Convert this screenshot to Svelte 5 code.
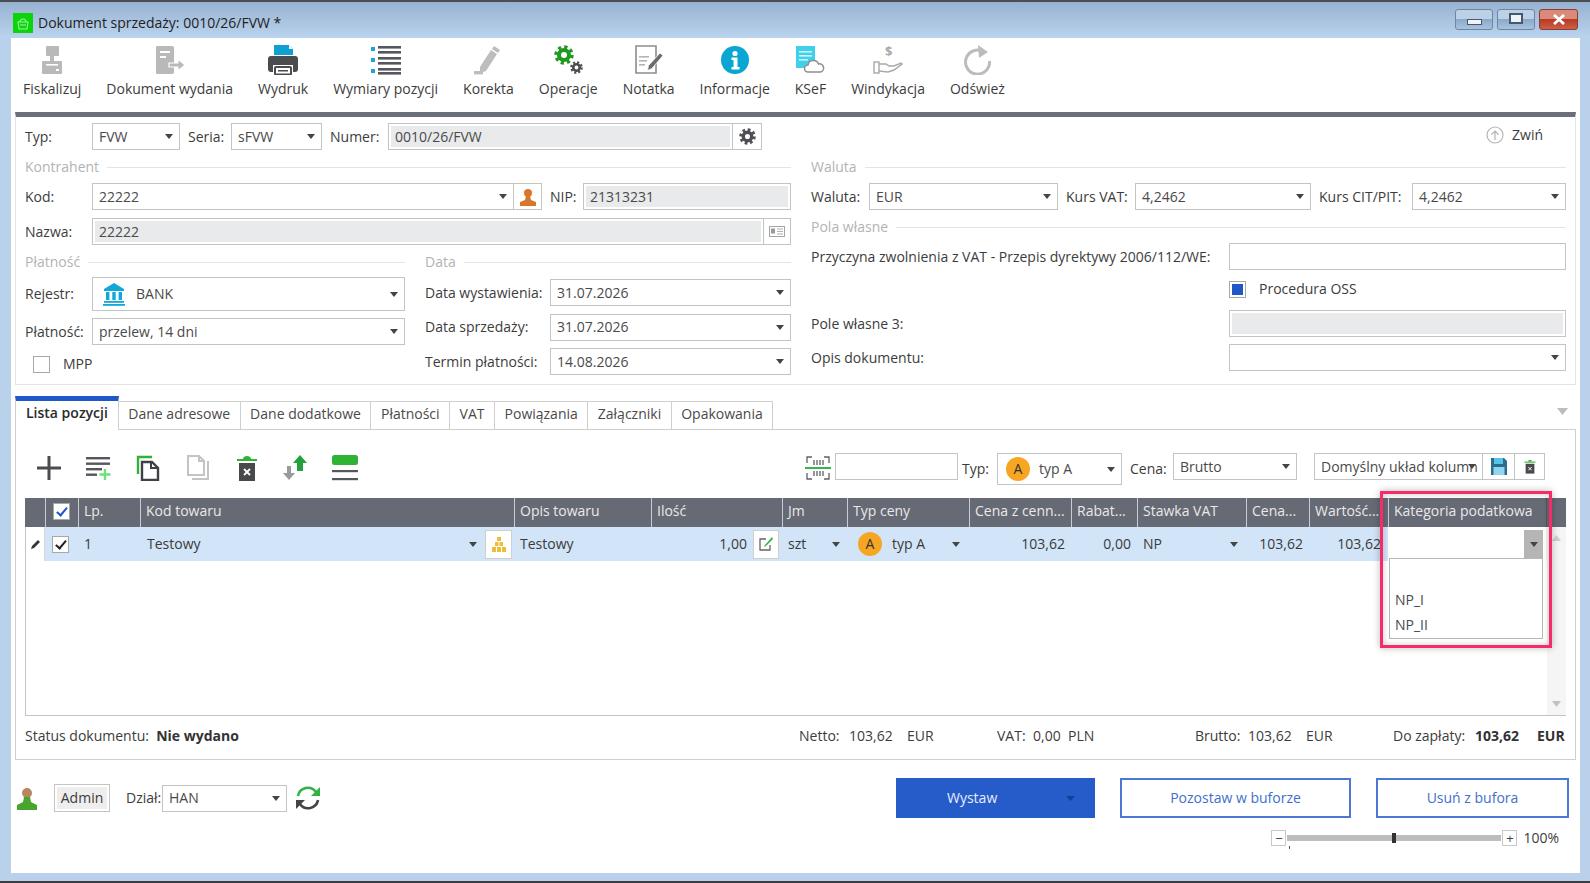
<script>
  const ribbon = ['Fiskalizuj', 'Dokument wydania', 'Wydruk', 'Wymiary pozycji', 'Korekta', 'Operacje', 'Notatka', 'Informacje', 'KSeF', 'Windykacja', 'Odśwież'];
  const tabs = ['Lista pozycji', 'Dane adresowe', 'Dane dodatkowe', 'Płatności', 'VAT', 'Powiązania', 'Załączniki', 'Opakowania'];
  const heads = ['', '', 'Lp.', 'Kod towaru', 'Opis towaru', 'Ilość', 'Jm', 'Typ ceny', 'Cena z cenn...', 'Rabat...', 'Stawka VAT', 'Cena...', 'Wartość...', 'Kategoria podatkowa', ''];
</script>

{#snippet caret()}
  <svg class="caret" width="8" height="5" viewBox="0 0 8 5"><path d="M0 0h8L4 5z" fill="#444" /></svg>
{/snippet}

{#snippet sel(value)}
  <div class="field sel"><span class="val">{value}</span>{@render caret()}</div>
{/snippet}

{#snippet badge()}
  <span class="badge">A</span>
{/snippet}

{#snippet gear(size, color)}
  <svg width={size} height={size} viewBox="0 0 20 20">
    <circle cx="10" cy="10" r="5" fill="none" stroke={color} stroke-width="4" />
    <circle cx="10" cy="10" r="8" fill="none" stroke={color} stroke-width="3.4" stroke-dasharray="3.2 3.08" />
  </svg>
{/snippet}

{#snippet ribbonIcon(i)}
  {#if i === 0}
    <svg width="22" height="30" viewBox="0 0 22 30" fill="#b9b9b9"><rect x="5" y="1" width="13" height="10" rx="1" /><rect x="9" y="11" width="4" height="6" /><path d="M2 16h18a1 1 0 0 1 1 1v11a1 1 0 0 1-1 1H2a1 1 0 0 1-1-1V17a1 1 0 0 1 1-1z" /><rect x="5" y="19" width="12" height="1.6" fill="#fff" /><rect x="15" y="24" width="3" height="2" fill="#fff" /></svg>
  {:else if i === 1}
    <svg width="30" height="30" viewBox="0 0 30 30" fill="#b9b9b9"><path d="M2 1h15a2 2 0 0 1 2 2v24a2 2 0 0 1-2 2H2a1 1 0 0 1-1-1V2a1 1 0 0 1 1-1z" /><rect x="5" y="6" width="10" height="2" fill="#fff" /><rect x="5" y="11" width="6" height="2" fill="#fff" /><path d="M14 18h9v-4l7 6-7 6v-4h-9z" stroke="#fff" stroke-width="1.2" /></svg>
  {:else if i === 2}
    <svg width="30" height="30" viewBox="0 0 30 30"><path d="M6 0h15l4 4v6H6z" fill="#0fa0d2" /><path d="M21 0v4h4z" fill="#fff" /><path d="M3 11h24a3 3 0 0 1 3 3v10a3 3 0 0 1-3 3h-2v-7H5v7H3a3 3 0 0 1-3-3V14a3 3 0 0 1 3-3z" fill="#4a4c50" /><rect x="7" y="22" width="16" height="7.5" rx="1" fill="none" stroke="#4a4c50" stroke-width="2" /><rect x="10" y="25" width="10" height="1.5" fill="#4a4c50" /></svg>
  {:else if i === 3}
    <svg width="30" height="30" viewBox="0 0 30 30"><g fill="#1aa7d8"><rect x="0" y="2" width="4" height="4" /><rect x="0" y="13" width="4" height="4" /><rect x="0" y="24" width="4" height="4" /></g><g fill="#55575c"><rect x="7" y="1" width="23" height="2.6" /><rect x="7" y="6" width="23" height="2.6" /><rect x="7" y="12" width="23" height="2.6" /><rect x="7" y="17" width="23" height="2.6" /><rect x="7" y="23" width="23" height="2.6" /><rect x="7" y="27" width="23" height="2.6" /></g></svg>
  {:else if i === 4}
    <svg width="28" height="30" viewBox="0 0 28 30" fill="#bdbdbd"><path d="M20 1l6 4-2 3-6-4z" /><path d="M17 5l6 4-11 17-6 2 0-6z" /><rect x="0" y="26" width="9" height="3.4" /></svg>
  {:else if i === 5}
    <svg width="30" height="30" viewBox="0 0 30 30"><g transform="translate(1 0)">{@render gear(20, '#1f9a1f')}</g></svg>
    <span class="ops-small">{@render gear(13, '#4c4c4c')}</span>
  {:else if i === 6}
    <svg width="30" height="30" viewBox="0 0 30 30"><path d="M2 1h20v27H2z" fill="#fff" stroke="#8d8d8d" stroke-width="1.6" /><g fill="#b5b5b5"><rect x="5" y="11" width="10" height="1.6" /><rect x="5" y="15" width="8" height="1.6" /><rect x="5" y="19" width="6" height="1.6" /></g><path d="M26 8l3 2.5-11 13-4.5 2 1-5z" fill="#6b6b6b" stroke="#fff" stroke-width=".8" /></svg>
  {:else if i === 7}
    <svg width="30" height="30" viewBox="0 0 30 30"><circle cx="15" cy="15" r="14" fill="#0aa6d3" /><circle cx="15" cy="8.5" r="2.6" fill="#fff" /><path d="M11.5 12.5h6v9.5h2v2.5h-8V22h2v-7h-2z" fill="#fff" /></svg>
  {:else if i === 8}
    <svg width="30" height="30" viewBox="0 0 30 30"><path d="M1 1h19v22H1z" fill="#3fd0ea" /><g fill="#fff" opacity=".75"><rect x="4" y="6" width="13" height="1.6" /><rect x="4" y="10" width="13" height="1.6" /><rect x="4" y="14" width="9" height="1.6" /></g><path d="M13 27a3.5 3.5 0 0 1 0-7 5.5 5.5 0 0 1 10.500-1 4 4 0 0 1 2 8z" fill="#fff" stroke="#8e8e8e" stroke-width="1.5" /></svg>
  {:else if i === 9}
    <svg width="30" height="30" viewBox="0 0 30 30" fill="none" stroke="#a9a9a9" stroke-width="1.4"><text x="12" y="11" font-size="13" font-family="Open Sans, sans-serif" font-weight="700" fill="#a9a9a9" stroke="none">$</text><rect x="1" y="17" width="5" height="11" /><path d="M6 19h7l3 2h5l7-3 1 1-8 6-6 2-9-1" /></svg>
  {:else}
    <svg width="30" height="30" viewBox="0 0 30 30" fill="none"><path d="M22 7a12 12 0 1 0 5.500 9" stroke="#bcbcbc" stroke-width="3" /><path d="M16 0l10 7-9 6z" fill="#bcbcbc" /></svg>
  {/if}
{/snippet}

<div class="window">
  <header class="title">
    <span class="app-ico">
      <svg width="14" height="14" viewBox="0 0 14 14" fill="none" stroke="#9ff09f" stroke-width="1.1"><path d="M2 6h10l-1 7H3z" /><path d="M4 6a3 3 0 0 1 6 0" /><path d="M4 9h6" /></svg>
    </span>
    <span class="title-text">Dokument sprzedaży: 0010/26/FVW *</span>
    <div class="winbtns">
      <span class="wb"><i class="wb-min"></i></span>
      <span class="wb"><i class="wb-max"></i></span>
      <span class="wb close">
        <svg width="14" height="11" viewBox="0 0 14 11"><path d="M2 1l10 9M12 1L2 10" stroke="#fff" stroke-width="2.8" /></svg>
      </span>
    </div>
  </header>

  <div class="client">
    <nav class="ribbon">
      {#each ribbon as label, i}
        <div class="rb-item">
          <div class="rb-ico">{@render ribbonIcon(i)}</div>
          <span>{label}</span>
        </div>
      {/each}
    </nav>

    <section class="form">
      <div class="row row-top">
        <label>Typ:</label>
        {@render sel('FVW')}
        <label class="pad">Seria:</label>
        {@render sel('sFVW')}
        <label class="pad">Numer:</label>
        <div class="field ro"><span class="val">0010/26/FVW</span></div>
        <div class="field btn">{@render gear(17, '#4d4f54')}</div>
        <div class="zwin">
          <svg width="18" height="18" viewBox="0 0 18 18" fill="none" stroke="#b5b5b5" stroke-width="1.2"><circle cx="9" cy="9" r="8" /><path d="M9 14V5M5.500 8.500L9 5l3.500 3.500" /></svg>
          <span>Zwiń</span>
        </div>
      </div>

      <div class="cols">
        <div class="col">
          <div class="heading"><span>Kontrahent</span></div>
          <div class="row row-kod">
            <label>Kod:</label>
            {@render sel('22222')}
            <div class="field btn">
              <svg width="16" height="18" viewBox="0 0 16 18" fill="#d9762c"><circle cx="8" cy="5" r="4" /><path d="M6 8h4l1 4 5 2v4H0v-4l5-2z" /></svg>
            </div>
            <label class="pad">NIP:</label>
            <div class="field ro"><span class="val">21313231</span></div>
          </div>
          <div class="row row-nazwa">
            <label>Nazwa:</label>
            <div class="field ro"><span class="val">22222</span></div>
            <div class="field btn">
              <svg width="16" height="11" viewBox="0 0 16 11"><rect x=".5" y=".5" width="15" height="10" fill="#fff" stroke="#a5a5a5" /><rect x="2" y="2.500" width="4" height="5" fill="#9a9a9a" /><path d="M8 3h6M8 5.500h6M8 8h6" stroke="#b0b0b0" /></svg>
            </div>
          </div>

          <div class="subcols">
            <div>
              <div class="heading"><span>Płatność</span></div>
              <div class="row row-pay tall">
                <label>Rejestr:</label>
                <div class="field sel">
                  <svg class="bank" width="24" height="24" viewBox="0 0 24 24" fill="#10a8d8"><path d="M12 1L2 7v2h20V7z" /><rect x="4" y="10" width="3.400" height="8" /><rect x="10.300" y="10" width="3.400" height="8" /><rect x="16.600" y="10" width="3.400" height="8" /><rect x="2" y="19" width="20" height="1.800" /><rect x="1" y="22" width="22" height="1.800" /></svg>
                  <span class="val bank-val">BANK</span>
                  {@render caret()}
                </div>
              </div>
              <div class="row row-pay">
                <label>Płatność:</label>
                {@render sel('przelew, 14 dni')}
              </div>
              <div class="check-row mpp"><i class="chk"></i><span>MPP</span></div>
            </div>
            <div>
              <div class="heading"><span>Data</span></div>
              <div class="dates">
                <div class="row row-date"><label>Data wystawienia:</label>{@render sel('31.07.2026')}</div>
                <div class="row row-date"><label>Data sprzedaży:</label>{@render sel('31.07.2026')}</div>
                <div class="row row-date"><label>Termin płatności:</label>{@render sel('14.08.2026')}</div>
              </div>
            </div>
          </div>
        </div>

        <div class="col">
          <div class="heading"><span>Waluta</span></div>
          <div class="row row-cur">
            <label>Waluta:</label>
            {@render sel('EUR')}
            <label class="pad">Kurs VAT:</label>
            {@render sel('4,2462')}
            <label class="pad">Kurs CIT/PIT:</label>
            {@render sel('4,2462')}
          </div>
          <div class="heading h-own"><span>Pola własne</span></div>
          <div class="row row-own first">
            <label>Przyczyna zwolnienia z VAT - Przepis dyrektywy 2006/112/WE:</label>
            <div class="field"></div>
          </div>
          <div class="row row-own oss">
            <span></span>
            <div class="check-row"><i class="chk on"></i><span>Procedura OSS</span></div>
          </div>
          <div class="row row-own pole">
            <label>Pole własne 3:</label>
            <div class="field ro"></div>
          </div>
          <div class="row row-own opis">
            <label>Opis dokumentu:</label>
            {@render sel('')}
          </div>
        </div>
      </div>
    </section>

    <div class="tabbar">
      {#each tabs as t, i}
        <div class="tab" class:active={i === 0}>{t}</div>
      {/each}
      <svg class="collapse" width="11" height="7" viewBox="0 0 11 7"><path d="M0 0h11L5.500 7z" fill="#bdbdbd" /></svg>
    </div>

    <section class="panel">
      <div class="tools">
        <div class="tool-icons">
          <svg width="26" height="26" viewBox="0 0 26 26"><path d="M13 1v24M1 13h24" stroke="#4a4c50" stroke-width="3" /></svg>
          <svg width="26" height="26" viewBox="0 0 26 26"><g fill="#55575c"><rect x="0" y="2" width="24" height="2.400" /><rect x="0" y="7.500" width="24" height="2.400" /><rect x="0" y="13" width="16" height="2.400" /><rect x="0" y="18.500" width="11" height="2.400" /></g><path d="M19 14v11M13.500 19.500h11" stroke="#6fe07c" stroke-width="2.400" /></svg>
          <svg width="26" height="26" viewBox="0 0 26 26" fill="none"><path d="M2 19V2h14" stroke="#2fb335" stroke-width="2.400" /><path d="M6 7h10l6 6v12H6z" fill="#fff" stroke="#3f4145" stroke-width="2.400" /><path d="M15 7v6h7" stroke="#3f4145" stroke-width="2" /></svg>
          <svg width="26" height="26" viewBox="0 0 26 26" fill="none" stroke="#c4c4c4" stroke-width="2"><path d="M2 1h11l5 5v14H2z" /><path d="M13 1v5h5" /><path d="M22 6v18H6" /></svg>
          <svg width="22" height="26" viewBox="0 0 22 26"><path d="M1 4h20V6H1z" fill="#2fb335" /><path d="M7 4c0-4 8-4 8 0" fill="#2fb335" /><rect x="3" y="8" width="16" height="18" fill="#48494d" /><path d="M8 14l6 6M14 14l-6 6" stroke="#fff" stroke-width="1.800" /></svg>
          <svg width="26" height="26" viewBox="0 0 26 26"><path d="M7 25l-6-7h4v-7h4v7h4z" fill="#9a9a9a" /><path d="M18 0l7 8h-4v8h-6V8h-4z" fill="#25a03f" /></svg>
          <svg width="26" height="26" viewBox="0 0 26 26"><rect x="0" y="0" width="26" height="10" rx="2.500" fill="#2fb335" /><rect x="0" y="15" width="26" height="2.200" fill="#55575c" /><rect x="0" y="23" width="26" height="2.200" fill="#55575c" /></svg>
        </div>
        <div class="tool-right">
          <svg class="barcode" width="26" height="26" viewBox="0 0 26 26" fill="none" stroke="#5f6165" stroke-width="1.300"><path d="M2 8V2h5M24 8V2h-5M2 18v6h5M24 18v6h-5" /><path d="M9 5v5M12 5v5M15 5v5M18 5v5M9 16v5M12 16v5M15 16v5M18 16v5" /><path d="M0 13h26" stroke="#36b54a" stroke-width="2" /></svg>
          <div class="field search"></div>
          <label>Typ:</label>
          <div class="field sel typ">{@render badge()}<span class="val">typ A</span>{@render caret()}</div>
          <label>Cena:</label>
          {@render sel('Brutto')}
          <div class="layout">{@render sel('Domyślny układ kolumn')}</div>
          <div class="field btn">
            <svg width="16" height="17" viewBox="0 0 16 17"><path d="M0 0h13l3 3v14H0z" fill="#2a6d8d" /><rect x="3" y="0" width="9" height="6" fill="#58c3e6" /><rect x="2.500" y="9" width="11" height="8" fill="#8fd7ef" /></svg>
          </div>
          <div class="field btn">
            <svg width="12" height="17" viewBox="0 0 22 26"><path d="M1 4h20V6H1z" fill="#2fb335" /><path d="M7 4c0-4 8-4 8 0" fill="#2fb335" /><rect x="3" y="8" width="16" height="18" fill="#48494d" /><path d="M8 14l6 6M14 14l-6 6" stroke="#fff" stroke-width="1.800" /></svg>
          </div>
        </div>
      </div>

      <div class="grid">
        <div class="thead">
          {#each heads as h, i}
            <div class="th">
              {#if i === 1}<i class="chk checked blue"></i>{:else}{h}{/if}
            </div>
          {/each}
        </div>
        <div class="tr">
          <div class="td pin">
            <svg width="11" height="11" viewBox="0 0 11 11"><path d="M8 1l2 2-6 6-3 1 1-3z" fill="#333" /></svg>
          </div>
          <div class="td center"><i class="chk checked"></i></div>
          <div class="td lp">1</div>
          <div class="td kod"><span>Testowy</span>{@render caret()}<div class="cellbtn">
            <svg width="16" height="17" viewBox="0 0 16 17" fill="#f0bd3a"><rect x="6" y="1" width="4" height="4" /><rect x="4" y="6" width="3.500" height="4" /><rect x="8.500" y="6" width="3.500" height="4" /><rect x="1" y="11" width="4" height="5" /><rect x="6" y="11" width="4" height="5" /><rect x="11" y="11" width="4" height="5" /></svg>
          </div></div>
          <div class="td">Testowy</div>
          <div class="td ilosc"><span>1,00</span><div class="cellbtn small">
            <svg width="16" height="16" viewBox="0 0 16 16" fill="none"><path d="M12 9v5H2V3h6" stroke="#666" stroke-width="1.300" /><path d="M14 1L7 9l-1 2 2-1 7-7z" fill="#35b54a" /></svg>
          </div></div>
          <div class="td jm"><span>szt</span>{@render caret()}</div>
          <div class="td typc">{@render badge()}<span>typ A</span>{@render caret()}</div>
          <div class="td num">103,62</div>
          <div class="td num">0,00</div>
          <div class="td vat"><span>NP</span>{@render caret()}</div>
          <div class="td num">103,62</div>
          <div class="td num tight">103,62</div>
          <div class="td edit"><div class="arrowbox">{@render caret()}</div></div>
          <div class="td sb"></div>
        </div>
        <div class="gridbody">
          <div class="scroll">
            <svg width="9" height="6" viewBox="0 0 9 6"><path d="M0 6h9L4.500 0z" fill="#d0d0d0" /></svg>
            <svg width="9" height="6" viewBox="0 0 9 6"><path d="M0 0h9L4.500 6z" fill="#c2c2c2" /></svg>
          </div>
        </div>

        <div class="popup">
          <div class="opt"></div>
          <div class="opt">NP_I</div>
          <div class="opt">NP_II</div>
        </div>
        <div class="mark"></div>
      </div>

      <div class="status">
        <span>Status dokumentu:&nbsp; <b>Nie wydano</b></span>
        <span>Netto:</span><span>103,62</span><span>EUR</span>
        <span>VAT:</span><span>0,00</span><span>PLN</span>
        <span>Brutto:</span><span>103,62</span><span>EUR</span>
        <span>Do zapłaty:</span><b>103,62</b><b>EUR</b>
      </div>
    </section>

    <footer class="foot">
      <div class="foot-left">
        <svg width="22" height="24" viewBox="0 0 22 24"><circle cx="11" cy="6" r="5" fill="#b8865f" /><path d="M8 10h6l1 5 6 3v5H1v-5l6-3z" fill="#4aa52e" /></svg>
        <div class="field admin"><span>Admin</span></div>
        <label>Dział:</label>
        {@render sel('HAN')}
        <svg class="refresh" width="26" height="26" viewBox="0 0 26 26" fill="none"><path d="M3 11a10 10 0 0 1 18-4" stroke="#2fb345" stroke-width="2.600" /><path d="M25 2v9h-9z" fill="#2fb345" /><path d="M23 15a10 10 0 0 1-18 4" stroke="#444" stroke-width="2.600" /><path d="M1 24v-9h9z" fill="#444" /></svg>
      </div>
      <div class="foot-right">
        <button class="primary"><span>Wystaw</span><svg width="9" height="5" viewBox="0 0 9 5"><path d="M0 0h9L4.500 5z" fill="#123f99" /></svg></button>
        <button class="ghost b1">Pozostaw w buforze</button>
        <button class="ghost b2">Usuń z bufora</button>
      </div>
    </footer>

    <div class="zoombar">
      <span class="zb">−</span>
      <div class="slider"><i></i><em></em></div>
      <span class="zb">+</span>
      <span class="pct">100%</span>
    </div>
  </div>
</div>

<style>
  :global(body) {
    margin: 0;
    background: #3a3c40;
  }

  .window {
    width: 1590px;
    height: 881px;
    overflow: hidden;
    box-sizing: border-box;
    border-top: 2px solid #4a4d52;
    background: #b9d1ea;
    font: 14px/18px "Open Sans", sans-serif;
    color: #3c3c3c;
    position: relative;
  }

  .title {
    height: 36px;
    box-sizing: border-box;
    display: flex;
    align-items: center;
    padding: 6px 12px 0 13px;
    background: linear-gradient(#97b2d1, #bad3ee);
  }
  .app-ico {
    width: 20px;
    height: 20px;
    background: #0ad40a;
    display: flex;
    align-items: center;
    justify-content: center;
    margin-right: 5px;
  }
  .title-text {
    color: #222;
  }
  .winbtns {
    margin-left: auto;
    display: flex;
    gap: 4px;
    margin-top: -8px;
  }
  .wb {
    width: 38px;
    height: 21px;
    box-sizing: border-box;
    border: 1px solid #6d86a3;
    border-radius: 3px;
    background: linear-gradient(#bcd0e6 45%, #8ba9c9 50%, #a8c3de);
    display: flex;
    align-items: center;
    justify-content: center;
  }
  .wb.close {
    background: linear-gradient(#d98a78 45%, #bb3a22 50%, #c9604a);
    border-color: #8a3d30;
    width: 39px;
  }
  .wb-min {
    width: 13px;
    height: 4px;
    background: #eef3f8;
    border: 1px solid #46586d;
    margin-top: 5px;
  }
  .wb-max {
    width: 10px;
    height: 7px;
    background: #eef3f8;
    box-shadow: inset 0 0 0 2px #eef3f8;
    border: 2px solid #46586d;
    margin-top: -2px;
  }

  .client {
    margin: 0 10px 0 11px;
    height: 835px;
    background: #fff;
    padding: 0 4px;
    box-sizing: border-box;
    display: flex;
    flex-direction: column;
  }

  .ribbon {
    height: 74px;
    box-sizing: border-box;
    border-bottom: 0;
    display: flex;
    gap: 25px;
    padding: 7px 0 0 8px;
    flex: none;
  }
  .rb-item {
    display: flex;
    flex-direction: column;
    align-items: center;
  }
  .rb-ico {
    height: 30px;
    margin-bottom: 5px;
    position: relative;
    display: flex;
    justify-content: center;
  }
  .ops-small {
    position: absolute;
    left: 17px;
    top: 15px;
  }

  .form {
    flex: none;
    height: 273px;
    box-sizing: border-box;
    border-top: 5px solid #6b6f7a;
    border-left: 1px solid #e4e4e4;
    border-right: 1px solid #e4e4e4;
    border-bottom: 1px solid #e4e4e4;
    padding: 6px 9px 0;
  }

  label {
    white-space: nowrap;
    color: #3c3c3c;
    align-self: center;
  }
  .pad {
    padding-left: 8px;
  }
  .row {
    display: grid;
    height: 27px;
    align-items: stretch;
  }
  .field {
    border: 1px solid #c4c4c4;
    box-sizing: border-box;
    background: #fff;
    display: flex;
    align-items: center;
    padding: 0 6px;
    min-width: 0;
    white-space: nowrap;
  }
  .val {
    flex: 1;
    min-width: 0;
    color: #4a4a4a;
  }
  .ro {
    background: #e9eaec;
    box-shadow: inset 0 0 0 2px #fff;
  }
  .btn {
    justify-content: center;
    padding: 0;
    border-left: 0;
  }
  .caret {
    flex: none;
    margin-right: 0;
  }

  .row-top {
    grid-template-columns: 67px 88px 51px 91px 66px 345px 29px 1fr;
  }
  .zwin {
    justify-self: end;
    display: flex;
    align-items: center;
    gap: 8px;
    margin-right: 23px;
    margin-top: -3px;
  }
  .cols {
    display: grid;
    grid-template-columns: 766px 755px;
    gap: 20px;
    margin-top: 8px;
  }
  .heading {
    height: 18px;
    display: flex;
    align-items: center;
    gap: 8px;
    color: #b3b3b3;
  }
  .heading::after {
    content: "";
    flex: 1;
    height: 1px;
    background: #e4e4e4;
  }
  .row-kod {
    grid-template-columns: 67px 422px 28px 41px 208px;
    margin-top: 7px;
  }
  .row-nazwa {
    grid-template-columns: 67px 672px 27px;
    margin-top: 8px;
  }
  .subcols {
    display: grid;
    grid-template-columns: 380px 366px;
    gap: 20px;
    margin-top: 8px;
  }
  .row-pay {
    grid-template-columns: 67px 313px;
    margin-top: 7px;
  }
  .row-pay.tall {
    height: 34px;
    margin-top: 6px;
  }
  .bank {
    margin-right: 10px;
    margin-left: 3px;
  }
  .bank-val {
    flex: 1;
  }
  .check-row {
    display: flex;
    align-items: center;
    gap: 13px;
  }
  .mpp {
    height: 26px;
    margin-top: 6px;
    padding-left: 8px;
  }
  .chk {
    display: block;
    width: 17px;
    height: 17px;
    box-sizing: border-box;
    border: 1px solid #a8a8a8;
    background: #fff;
    position: relative;
    flex: none;
  }
  .chk.on::after {
    content: "";
    position: absolute;
    inset: 2px;
    background: #1f58c7;
  }
  .chk.checked::after {
    content: "";
    position: absolute;
    left: 5px;
    top: 1px;
    width: 4px;
    height: 9px;
    border: solid #222;
    border-width: 0 2px 2px 0;
    transform: rotate(40deg);
  }
  .chk.blue::after {
    border-color: #1f58c7;
  }
  .dates {
    margin-top: 8px;
    display: flex;
    flex-direction: column;
    gap: 7.5px;
  }
  .row-date {
    grid-template-columns: 125px 241px;
  }
  .row-cur {
    grid-template-columns: 58px 189px 77px 176px 101px 154px;
    margin-top: 7px;
  }
  .row-cur label {
    font-size: 14px;
  }
  .h-own {
    margin-top: 8px;
  }
  .row-own {
    grid-template-columns: 418px 337px;
    margin-top: 7px;
  }
  .row-own.oss {
    margin-top: 6px;
    height: 26px;
  }
  .row-own.pole {
    margin-top: 8px;
  }

  .tabbar {
    flex: none;
    margin-top: 11px;
    height: 33px;
    display: flex;
    align-items: flex-end;
    position: relative;
    z-index: 1;
  }
  .tab {
    height: 28px;
    box-sizing: border-box;
    border: 1px solid #cfcfcf;
    border-left: 0;
    border-bottom: 0;
    padding: 3px 9.500px 0;
    color: #4a4a4a;
    white-space: nowrap;
  }
  .tab.active {
    height: 33px;
    border-top: 5px solid #1f58c7;
    border-left: 1px solid #cfcfcf;
    padding: 3px 10px 0;
    color: #2a2a2a;
    font-weight: 600;
    background: #fff;
    margin-bottom: -1px;
    height: 34px;
  }
  .collapse {
    margin-left: auto;
    margin-right: 8px;
    align-self: flex-start;
    margin-top: 12px;
  }

  .panel {
    flex: none;
    height: 331px;
    box-sizing: border-box;
    border: 1px solid #cfcfcf;
    padding: 23px 9px 0;
  }
  .tools {
    height: 32px;
    display: flex;
    justify-content: space-between;
    margin-bottom: 13px;
  }
  .tool-icons {
    display: flex;
    gap: 24px;
    padding-left: 11px;
    align-items: center;
    height: 30px;
  }
  .tool-right {
    display: grid;
    grid-template-columns: 26px 123px 43px 125px 51px 124px 186px 32px 30px;
    align-items: start;
    column-gap: 0;
    width: 761px;
  }
  .tool-right .barcode {
    margin-top: 2px;
  }
  .tool-right > .field,
  .tool-right .layout {
    height: 27px;
  }
  .tool-right label {
    align-self: start;
    margin-top: 7px;
    padding-left: 8px;
  }
  .search {
    margin-left: 4px;
    width: 123px;
  }
  .tool-right .search {
    width: 123px;
    margin-left: 4px;
  }
  .tool-right > .field.typ {
    height: 32px;
    padding-left: 8px;
  }
  .layout {
    padding-left: 17px;
    display: flex;
  }
  .layout .field {
    flex: 1;
  }
  .badge {
    width: 24px;
    height: 24px;
    border-radius: 50%;
    background: #f6a623;
    color: #333;
    display: inline-flex;
    align-items: center;
    justify-content: center;
    margin-right: 9px;
    flex: none;
  }

  .grid {
    position: relative;
    height: 218px;
    border: 1px solid #c4c4c4;
    box-sizing: border-box;
    --cols: 20px 33px 62px 374px 137px 131px 65px 122px 102px 66px 109px 63px 79px 158px 1fr;
    display: flex;
    flex-direction: column;
  }
  .thead,
  .tr {
    display: grid;
    grid-template-columns: var(--cols);
    flex: none;
  }
  .thead {
    height: 29px;
    background: #666a75;
    color: #e9e9e9;
    margin: -1px -1px 0;
  }
  .th {
    border-left: 1px solid #c9ccd2;
    padding: 4px 5px 0;
    white-space: nowrap;
    overflow: hidden;
    box-sizing: border-box;
  }
  .th:first-child {
    border-left: 0;
  }
  .th:nth-child(2) {
    padding: 5px 0 0 7px;
  }
  .th:last-child {
    border-left: 1px solid #555;
  }
  .tr {
    height: 34px;
    background: #d2e4f7;
    margin: 0 -1px;
  }
  .td {
    display: flex;
    align-items: center;
    white-space: nowrap;
    min-width: 0;
    overflow: hidden;
    box-sizing: border-box;
    padding-left: 6px;
    color: #3a3a3a;
  }
  .pin {
    background: #fff;
    padding-left: 4px;
    border-right: 1px solid #d8d8d8;
    border-left: 1px solid #c4c4c4;
  }
  .center {
    padding-left: 7px;
  }
  .kod {
    padding: 0 2px 0 7px;
  }
  .kod span {
    flex: 1;
  }
  .cellbtn {
    width: 27px;
    height: 29px;
    box-sizing: border-box;
    background: #fff;
    border: 1px solid #cfcfcf;
    display: flex;
    align-items: center;
    justify-content: center;
    margin-left: 8px;
    flex: none;
  }
  .cellbtn.small {
    margin-left: 6px;
    width: 26px;
  }
  .ilosc {
    justify-content: flex-end;
    padding-right: 3px;
  }
  .jm {
    justify-content: space-between;
    padding-right: 7px;
  }
  .typc {
    padding-right: 9px;
    padding-left: 11px;
  }
  .typc span:nth-child(2) {
    flex: 1;
  }
  .typc .badge {
    margin-right: 10px;
  }
  .num {
    justify-content: flex-end;
    padding-right: 6px;
  }
  .tight {
    padding-right: 0;
    overflow: visible;
    position: relative;
    left: -7px;
  }
  .vat {
    justify-content: space-between;
    padding-right: 8px;
  }
  .edit {
    background: #fff;
    justify-content: flex-end;
    padding: 1px 3px 0 0;
  }
  .arrowbox {
    width: 19px;
    height: 30px;
    background: #b5b5b5;
    display: flex;
    align-items: center;
    justify-content: center;
  }
  .sb {
    background: #f5f5f5;
  }
  .gridbody {
    flex: 1;
    display: flex;
    justify-content: flex-end;
    margin-right: -1px;
  }
  .scroll {
    width: 19px;
    background: #f5f5f5;
    display: flex;
    flex-direction: column;
    align-items: center;
    justify-content: space-between;
    padding: 0 0 8px;
    position: relative;
  }
  .scroll svg:first-child {
    margin-top: -26px;
  }

  .popup {
    position: absolute;
    left: 1363px;
    top: 59px;
    width: 154px;
    height: 81px;
    box-sizing: border-box;
    background: #fff;
    border: 1px solid #b8b8b8;
    padding-top: 3px;
    z-index: 2;
  }
  .opt {
    height: 25px;
    line-height: 25px;
    padding-left: 5px;
    color: #4a4a4a;
  }
  .opt:first-child {
    height: 25px;
  }
  .mark {
    position: absolute;
    left: 1354px;
    top: -8px;
    width: 172px;
    height: 157px;
    box-sizing: border-box;
    border: 3px solid #f72b69;
    box-shadow: 0 0 7px rgba(0, 0, 0, 0.28), inset 0 0 6px rgba(0, 0, 0, 0.22);
    z-index: 3;
  }

  .status {
    display: grid;
    grid-template-columns: 774px 50px 58px 90px 36px 35px 127px 53px 58px 87px 82px 62px 1fr;
    height: 20px;
    margin-top: 11px;
    white-space: nowrap;
  }
  .status b {
    color: #333;
    font-weight: 700;
  }

  .foot {
    flex: none;
    height: 40px;
    margin-top: 18px;
    display: flex;
    justify-content: space-between;
    padding: 0 7px 0 1px;
  }
  .foot-left {
    display: grid;
    grid-template-columns: 22px 56px 52px 125px 34px;
    column-gap: 0;
    align-items: center;
    height: 40px;
  }
  .foot-left svg:first-child {
    margin-top: 1px;
  }
  .admin {
    height: 28px;
    width: 56px;
    margin-left: 16px;
    padding: 0;
    justify-content: center;
    background: #eeeeee;
    box-shadow: inset 0 0 0 2px #fff;
  }
  .foot-left {
    grid-template-columns: 22px 72px 52px 125px 34px;
  }
  .foot-left label {
    padding-left: 8px;
    margin-left: 8px;
  }
  .foot-left > .sel {
    height: 27px;
    margin-left: 0;
  }
  .refresh {
    margin-left: 8px;
  }
  .foot-right {
    display: flex;
    gap: 25px;
  }
  button {
    font: inherit;
    box-sizing: border-box;
    height: 40px;
    background: #fff;
    border: 2px solid #4a78d4;
    color: #3f6fcb;
    padding: 0;
  }
  .primary {
    width: 199px;
    background: #265cc9;
    border: 0;
    color: #e8eefb;
    display: flex;
    align-items: center;
    padding: 0 20px 0 51px;
    justify-content: space-between;
  }
  .b1 {
    width: 231px;
  }
  .b2 {
    width: 193px;
  }

  .zoombar {
    flex: none;
    margin-top: 12px;
    height: 16px;
    display: flex;
    align-items: center;
    justify-content: flex-end;
    padding-right: 17px;
  }
  .zb {
    width: 15px;
    height: 16px;
    box-sizing: border-box;
    border: 1px solid #c8c8c8;
    display: flex;
    align-items: center;
    justify-content: center;
    font-size: 13px;
    line-height: 1;
  }
  .slider {
    width: 214px;
    height: 6px;
    margin: 0 1px;
    background: #bdbdbd;
    position: relative;
  }
  .slider i {
    position: absolute;
    left: 105px;
    top: -2px;
    width: 4px;
    height: 10px;
    background: #333;
  }
  .slider em {
    position: absolute;
    left: 2px;
    top: 11px;
    width: 1px;
    height: 3px;
    background: #555;
  }
  .pct {
    margin-left: 6px;
  }
</style>
